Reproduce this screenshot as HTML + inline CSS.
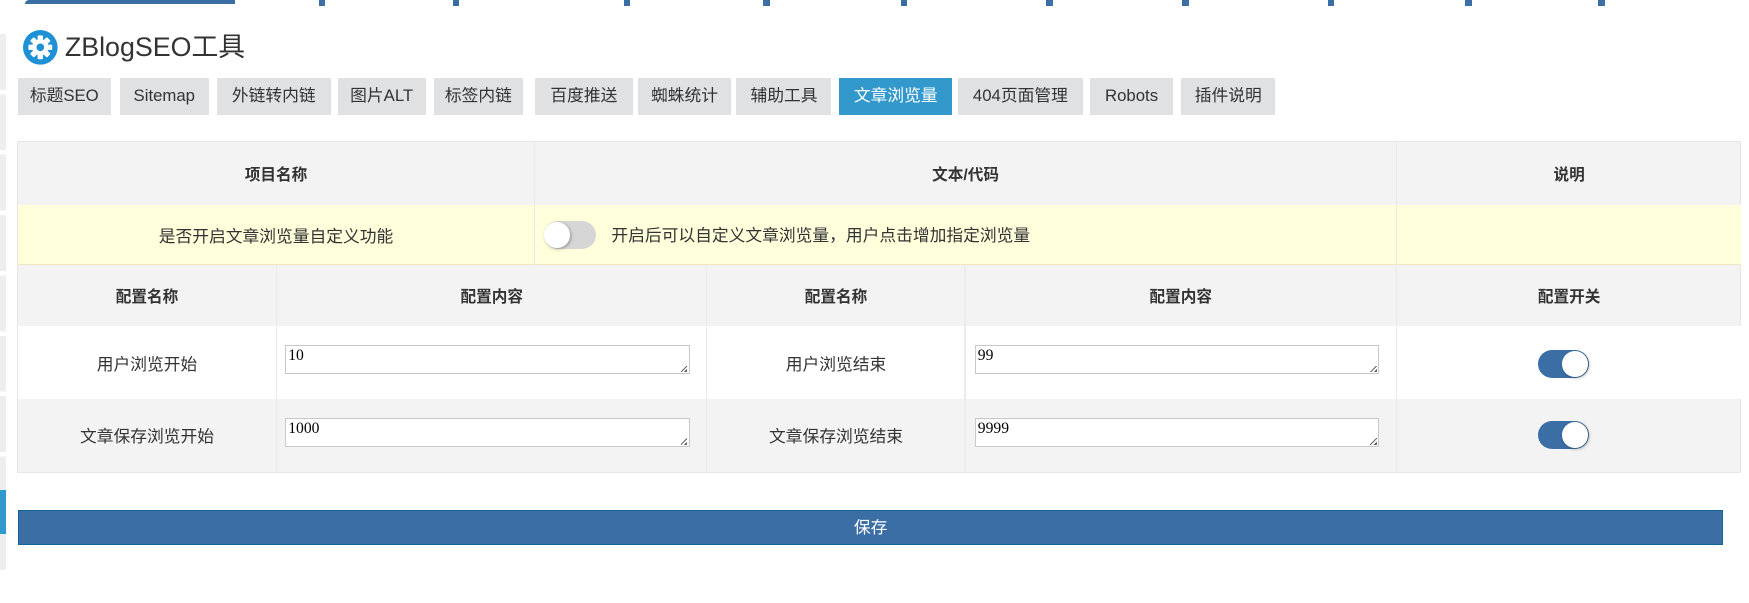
<!DOCTYPE html>
<html><head><meta charset="utf-8">
<style>
html,body{margin:0;padding:0;background:#fff;width:1749px;height:603px;overflow:hidden}
#w{zoom:1.1176;position:relative;width:1565px;height:540px;font-family:"Liberation Sans","Noto Sans CJK SC",sans-serif;color:#333;font-size:15px}
.a{position:absolute}
.tab{position:absolute;top:70px;height:33px;line-height:33px;background:#e0e1e3;text-align:center;font-size:15px;color:#333}
.tab.on{background:#3399cc;color:#fff}
.cell{position:absolute;display:flex;align-items:center;justify-content:center;box-sizing:border-box}
.b{font-weight:bold;font-size:14px}
.ta{position:absolute;height:26px;border:1px solid #c8c8c8;background:#fff;box-sizing:border-box;font-family:"Liberation Serif",serif;font-size:14px;color:#000;padding:1px 2px}
.ta:after{content:"";position:absolute;right:1px;bottom:1px;width:6px;height:6px;background:linear-gradient(135deg,transparent 45%,#666 45%,#666 55%,transparent 55%,transparent 75%,#666 75%)}
.sw{position:absolute;width:46px;height:25px;border-radius:13px;background:#3a6ea5}
.sw i{position:absolute;right:1px;top:1px;width:23px;height:23px;border-radius:50%;background:#fff;box-shadow:1px 1px 3px rgba(0,0,0,.3)}
</style></head><body><div id="w">
<div class="a" style="left:22px;top:0;width:188px;height:4px;background:#3a6ea5;border-radius:40px 0 0 0"></div>
<div class="a" style="left:285px;top:0;width:6px;height:5px;background:#3a6ea5"></div>
<div class="a" style="left:405px;top:0;width:6px;height:5px;background:#3a6ea5"></div>
<div class="a" style="left:558px;top:0;width:6px;height:5px;background:#3a6ea5"></div>
<div class="a" style="left:683px;top:0;width:6px;height:5px;background:#3a6ea5"></div>
<div class="a" style="left:806px;top:0;width:6px;height:5px;background:#3a6ea5"></div>
<div class="a" style="left:936px;top:0;width:6px;height:5px;background:#3a6ea5"></div>
<div class="a" style="left:1058px;top:0;width:6px;height:5px;background:#3a6ea5"></div>
<div class="a" style="left:1188px;top:0;width:6px;height:5px;background:#3a6ea5"></div>
<div class="a" style="left:1311px;top:0;width:6px;height:5px;background:#3a6ea5"></div>
<div class="a" style="left:1430px;top:0;width:6px;height:5px;background:#3a6ea5"></div>
<div class="a" style="left:0;top:30px;width:5px;height:480px;background:repeating-linear-gradient(#eee 0 50px,#fff 50px 54px)"></div>
<div class="a" style="left:0;top:438px;width:5px;height:40px;background:#3399cc"></div>
<svg class="a" style="left:21px;top:27px" width="31" height="31" viewBox="0 0 32 32"><circle cx="16" cy="16" r="16" fill="#1e90d6"/><g fill="#fff" transform="translate(16 16)"><circle r="7.5"/><g id="t"><rect x="-2.5" y="-11" width="5" height="5" rx="1"/></g><use href="#t" transform="rotate(45)"/><use href="#t" transform="rotate(90)"/><use href="#t" transform="rotate(135)"/><use href="#t" transform="rotate(180)"/><use href="#t" transform="rotate(225)"/><use href="#t" transform="rotate(270)"/><use href="#t" transform="rotate(315)"/></g><circle cx="16" cy="16" r="3.5" fill="#1e90d6"/></svg>
<div class="a" style="left:58px;top:27px;font-size:24px;color:#333;line-height:32px">ZBlogSEO工具</div>
<div class="tab" style="left:16px;width:83px">标题SEO</div>
<div class="tab" style="left:107px;width:80px">Sitemap</div>
<div class="tab" style="left:194px;width:102px">外链转内链</div>
<div class="tab" style="left:302px;width:79px">图片ALT</div>
<div class="tab" style="left:388px;width:80px">标签内链</div>
<div class="tab" style="left:479px;width:87px">百度推送</div>
<div class="tab" style="left:571px;width:83px">蜘蛛统计</div>
<div class="tab" style="left:659px;width:85px">辅助工具</div>
<div class="tab on" style="left:751px;width:101px">文章浏览量</div>
<div class="tab" style="left:857px;width:112px">404页面管理</div>
<div class="tab" style="left:975px;width:75px">Robots</div>
<div class="tab" style="left:1057px;width:84px">插件说明</div>

<div class="a" style="left:15px;top:126px;width:1543px;height:297px;border:1px solid #e6e6e6;box-sizing:border-box;background:#f3f3f3"></div>
<div class="cell b" style="left:16px;top:127px;width:462px;height:56px">项目名称</div>
<div class="a" style="left:478px;top:127px;width:1px;height:56px;background:#e8e8e8"></div>
<div class="cell b" style="left:479px;top:127px;width:770px;height:56px">文本/代码</div>
<div class="a" style="left:1249px;top:127px;width:1px;height:56px;background:#e8e8e8"></div>
<div class="cell b" style="left:1250px;top:127px;width:308px;height:56px">说明</div>

<div class="a" style="left:16px;top:183px;width:1542px;height:54px;background:#ffffdc;border-bottom:1px solid #eee8c0;box-sizing:border-box"></div>
<div class="cell" style="left:16px;top:183px;width:462px;height:54px">是否开启文章浏览量自定义功能</div>
<div class="a" style="left:478px;top:183px;width:1px;height:54px;background:#e8e8e8"></div>
<div class="a" style="left:1249px;top:183px;width:1px;height:54px;background:#e8e8e8"></div>
<div class="a" style="left:487px;top:198px;width:46px;height:25px;border-radius:13px;background:#d6d6d6"><i style="position:absolute;left:0;top:1px;width:23px;height:23px;border-radius:50%;background:#fff;box-shadow:1px 1px 3px rgba(0,0,0,.3)"></i></div>
<div class="a" style="left:547px;top:200px;line-height:22px">开启后可以自定义文章浏览量，用户点击增加指定浏览量</div>

<div class="cell b" style="left:16px;top:237px;width:231px;height:55px">配置名称</div>
<div class="cell b" style="left:248px;top:237px;width:384px;height:55px">配置内容</div>
<div class="cell b" style="left:633px;top:237px;width:230px;height:55px">配置名称</div>
<div class="cell b" style="left:864px;top:237px;width:385px;height:55px">配置内容</div>
<div class="cell b" style="left:1250px;top:237px;width:308px;height:55px">配置开关</div>

<div class="a" style="left:16px;top:292px;width:1542px;height:65px;background:#fff"></div>
<div class="a" style="left:247px;top:237px;width:1px;height:185px;background:#ebebeb"></div>
<div class="a" style="left:632px;top:237px;width:1px;height:185px;background:#ebebeb"></div>
<div class="a" style="left:863px;top:237px;width:1px;height:185px;background:#ebebeb"></div>
<div class="a" style="left:1249px;top:237px;width:1px;height:185px;background:#ebebeb"></div>

<div class="cell" style="left:16px;top:292px;width:231px;height:65px">用户浏览开始</div>
<div class="ta" style="left:255px;top:309px;width:362px">10</div>
<div class="cell" style="left:633px;top:292px;width:230px;height:65px">用户浏览结束</div>
<div class="ta" style="left:872px;top:309px;width:362px">99</div>
<div class="sw" style="left:1376px;top:313px"><i></i></div>

<div class="cell" style="left:16px;top:357px;width:231px;height:65px">文章保存浏览开始</div>
<div class="ta" style="left:255px;top:374px;width:362px">1000</div>
<div class="cell" style="left:633px;top:357px;width:230px;height:65px">文章保存浏览结束</div>
<div class="ta" style="left:872px;top:374px;width:362px">9999</div>
<div class="sw" style="left:1376px;top:377px"><i></i></div>

<div class="a" style="left:16px;top:456px;width:1526px;height:32px;background:#3a6ea5;border:1px solid #10649a;box-sizing:border-box;color:#fff;text-align:center;line-height:30px;font-size:15px">保存</div>
</div></body></html>
